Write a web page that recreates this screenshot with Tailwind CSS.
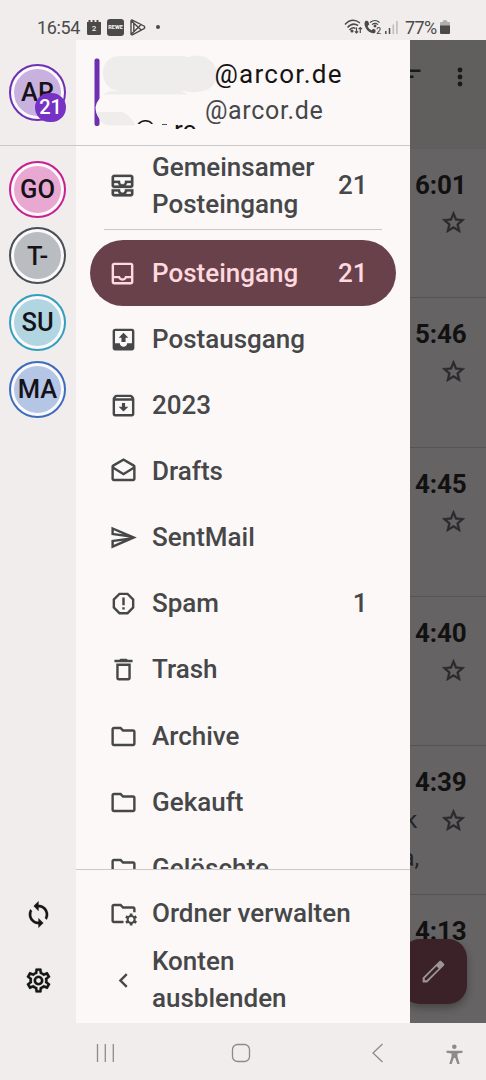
<!DOCTYPE html>
<html lang="de">
<head>
<meta charset="utf-8">
<title>Mail</title>
<script src="https://cdn.jsdelivr.net/npm/@tailwindcss/browser@4"></script>
</head>
<body class="w-[486px] h-[1080px] overflow-hidden bg-[#f0edec] font-['Roboto',sans-serif] text-[#464749]">
<svg class="hidden">
  <symbol id="folder" viewBox="0 0 24 24"><path d="M9.17 6l2 2H20v10H4V6h5.17M10 4H4c-1.1 0-1.99.9-1.99 2L2 18c0 1.1.9 2 2 2h16c1.1 0 2-.9 2-2V8c0-1.1-.9-2-2-2h-8l-2-2z"/></symbol>
  <symbol id="star" viewBox="0 0 24 24"><path d="M22 9.24l-7.19-.62L12 2 9.19 8.63 2 9.24l5.46 4.73L5.82 21 12 17.27 18.18 21l-1.63-7.03L22 9.24zM12 15.4l-3.76 2.27 1-4.28-3.32-2.88 4.38-.38L12 6.1l1.71 4.04 4.38.38-3.32 2.88 1 4.28L12 15.4z"/></symbol>
</svg>
<div class="flex flex-col h-full">
  <!-- status bar -->
  <header class="h-10 shrink-0 flex items-start pt-[17px] pl-[37px] pr-[36px] text-[#4b4a49]">
    <span class="w-[43px] text-[18px] leading-[21px] whitespace-nowrap tracking-[-0.35px]">16:54</span>
    <svg class="w-[14px] h-[15px] ml-[7px] mt-[3px]" viewBox="0 0 14 15"><path fill="#4b4a49" d="M0 2h1.5V0h2v2h2V0h2v2h2V0h2v2H14v11.5a1.5 1.5 0 0 1-1.5 1.5h-11A1.5 1.5 0 0 1 0 13.500z"/><text x="7" y="11" font-size="8" font-weight="500" text-anchor="middle" fill="#f0edec">2</text></svg>
    <span class="w-[17px] h-[17px] ml-[6px] mt-[2px] rounded-[3px] bg-[#4b4a49] text-[#f0edec] text-[5.500px] leading-[17px] font-black text-center flex justify-center">REWE</span>
    <svg class="w-4 h-[17px] ml-[6px] mt-[2px]" viewBox="0 0 16 17" fill="none" stroke="#4b4a49" stroke-width="1.400" stroke-linejoin="round"><path d="M1 2.500Q1 .5 2.800 1.300L14 7q1.500 1.300 0 2.600L2.800 15.600Q1 16.500 1 14.500zM1.500 2l9.700 9M1.500 15l9.700-9.400M3.800 4.500v8"/></svg>
    <span class="size-1 rounded-full bg-[#4b4a49] ml-[9.500px] mt-2"></span>
    <span class="grow"></span>
    <svg class="w-[55px] h-4 mt-[2px]" viewBox="0 0 55 16" fill="none" stroke="#4b4a49" stroke-width="1.500">
      <path d="M1 5.500Q8-2 16 4M3.500 8.500Q8.500 3 14 6.500M5.500 11Q8.500 7.500 11.500 9.500"/><circle cx="8" cy="12" r=".8" fill="#4b4a49"/><path stroke-width="1.200" d="M12.500 8.500v5.500M10.800 12.300l1.700 1.700 1.700-1.700M16.300 14V8.500M14.600 10.200l1.700-1.700 1.700 1.700"/>
      <path fill="#4b4a49" stroke="none" d="M22 1.800l2 .2 1.300 3.200-1.700 2c1 2 2.100 3.100 4 4l1.600-1.500 2.300 1.100v2.100c-.8 1.500-2 1.700-3.500 1.200C24 13 20.500 8.500 20.500 4.500c.2-1.400.6-2.400 1.500-2.700z"/>
      <path stroke-width="1.200" d="M26 3.500Q31-.5 35.500 3.500M28 5.600Q31 3 34 5.600"/><circle cx="31" cy="7" r=".7" fill="#4b4a49"/><text x="32.300" y="14.500" font-size="8.500" font-weight="500" stroke="none" fill="#4b4a49">2</text>
      <path stroke-width="1.500" d="M41.800 15v-3M45.500 15V9"/><path stroke-width="1.500" stroke="#bdbab9" d="M49.300 15V5.500M52.900 15V2"/>
    </svg>
    <span class="w-[33px] ml-[6px] text-[18px] leading-[21px] tracking-[-0.6px] whitespace-nowrap">77%</span>
    <svg class="w-[10px] h-[14px] ml-[2px] mt-[3px]" viewBox="0 0 10 14"><path fill="#b0adac" d="M0 3q0-1 1-1h1.500q0-2 2.500-2t2.500 2H9q1 0 1 1v3H0z"/><path fill="#4b4a49" d="M0 5.500h10V13q0 1-1 1H1q-1 0-1-1z"/></svg>
  </header>

  <main class="flex h-[983px] shrink-0">
    <!-- account rail -->
    <nav class="w-[76px] pr-px shrink-0 flex flex-col items-center text-[25.500px] font-medium text-[#151318]">
      <div class="w-[76px] h-[106px] -mr-px border-b border-[#cbc8c8] flex justify-center pt-6 pr-px shrink-0">
        <div class="relative size-[57px] rounded-full border-2 border-[#6e31b5] bg-[#fbf9fb] p-[3px]">
          <div class="size-full rounded-full bg-[#c9b1df] flex items-center justify-center">AR</div>
          <span class="absolute left-[24px] top-[26.500px] w-[31px] h-[29px] rounded-full bg-[#7731c4] text-white text-[20px] flex items-center justify-center">21</span>
        </div>
      </div>
      <div class="flex flex-col gap-[9.700px] pt-[14.500px]">
        <div class="size-[57px] rounded-full border-2 border-[#c82090] bg-[#fbf9fb] p-[3px]"><div class="size-full rounded-full bg-[#e9a8d1] flex items-center justify-center">GO</div></div>
        <div class="size-[57px] rounded-full border-2 border-[#475056] bg-[#fbf9fb] p-[3px]"><div class="size-full rounded-full bg-[#b9bcc0] flex items-center justify-center">T-</div></div>
        <div class="size-[57px] rounded-full border-2 border-[#349fbd] bg-[#fbf9fb] p-[3px]"><div class="size-full rounded-full bg-[#b1d5e1] flex items-center justify-center">SU</div></div>
        <div class="size-[57px] rounded-full border-2 border-[#3d6bbf] bg-[#fbf9fb] p-[3px]"><div class="size-full rounded-full bg-[#b5c5e5] flex items-center justify-center">MA</div></div>
      </div>
      <div class="mt-auto flex flex-col gap-[37px] pb-[28px] pl-px">
        <svg class="size-[29px]" viewBox="0 0 24 24" fill="#151515" stroke="#151515" stroke-width=".2"><path d="M12 4V1L8 5l4 4V6c3.310 0 6 2.690 6 6 0 1.010-.25 1.970-.7 2.800l1.460 1.460C19.540 15.030 20 13.570 20 12c0-4.420-3.580-8-8-8zm0 14c-3.310 0-6-2.690-6-6 0-1.010.25-1.970.7-2.800L5.240 7.740C4.460 8.970 4 10.430 4 12c0 4.420 3.580 8 8 8v3l4-4-4-4v3z"/></svg>
        <svg class="size-[29px]" viewBox="0 0 24 24" fill="#151515" stroke="#151515" stroke-width=".2"><path d="M19.43 12.98c.04-.32.07-.64.07-.98 0-.34-.03-.66-.07-.98l2.110-1.650c.19-.15.24-.42.12-.64l-2-3.460c-.09-.16-.26-.25-.44-.25-.06 0-.12.010-.17.030l-2.490 1c-.52-.4-1.080-.73-1.690-.98l-.38-2.650C14.460 2.180 14.250 2 14 2h-4c-.25 0-.46.18-.49.42l-.38 2.650c-.61.25-1.170.59-1.690.98l-2.490-1c-.06-.02-.12-.03-.18-.03-.17 0-.34.09-.43.25l-2 3.460c-.13.22-.07.49.12.64l2.110 1.650c-.04.32-.07.65-.07.98 0 .33.03.66.07.98l-2.110 1.650c-.19.15-.24.42-.12.64l2 3.460c.09.16.26.25.44.25.06 0 .12-.01.17-.03l2.490-1c.52.4 1.080.73 1.690.98l.38 2.650c.03.24.24.42.49.42h4c.25 0 .46-.18.49-.42l.38-2.650c.61-.25 1.170-.59 1.690-.98l2.490 1c.06.02.12.03.18.03.17 0 .34-.09.43-.25l2-3.460c.12-.22.07-.49-.12-.64l-2.110-1.650zm-1.980-1.710c.04.31.05.52.05.73 0 .21-.02.43-.05.73l-.14 1.130.89.7 1.080.84-.7 1.210-1.270-.51-1.040-.42-.9.68c-.43.32-.84.56-1.250.73l-1.060.43-.16 1.130-.2 1.350h-1.400l-.19-1.350-.16-1.130-1.060-.43c-.43-.18-.83-.41-1.230-.71l-.91-.7-1.060.43-1.270.51-.7-1.210 1.080-.84.89-.7-.14-1.130c-.03-.31-.05-.54-.05-.74s.02-.43.05-.73l.14-1.130-.89-.7-1.080-.84.7-1.210 1.270.51 1.040.42.9-.68c.43-.32.84-.56 1.250-.73l1.060-.43.16-1.130.2-1.350h1.390l.19 1.350.16 1.130 1.060.43c.43.18.83.41 1.230.71l.91.7 1.060-.43 1.270-.51.7 1.210-1.070.85-.89.7.14 1.130zM12 8c-2.210 0-4 1.790-4 4s1.790 4 4 4 4-1.790 4-4-1.790-4-4-4zm0 6c-1.100 0-2-.9-2-2s.9-2 2-2 2 .9 2 2-.9 2-2 2z"/></svg>
      </div>
    </nav>

    <!-- drawer -->
    <section class="w-[334px] shrink-0 bg-[#fcf8f7] flex flex-col text-[26px] font-medium leading-[37px]">
      <div class="relative h-[106px] shrink-0 border-b border-[#cbc8c8] font-normal whitespace-nowrap overflow-hidden">
        <svg class="absolute inset-0 w-[334px] h-[105px]" viewBox="76 40 334 105">
          <rect x="94.500" y="58.500" width="5" height="67.500" rx="2" fill="#6e2fb0"/>
          <path fill="#efedec" d="M119 56h66q4 2 7 0 12-2 20 6c8 9 6 24-6 28q-11 4-22 1h-64c-22 0-23-35-1-35z"/>
          <path fill="#efedec" d="M103 95q4-4 11-4h66q5 1 8 4z"/>
          <path fill="#fcf8f7" d="M106 94.500h82q14 2 14 14t-12 15h-78q-16-2-16.500-16 1.500-10 10.500-13z"/>
          <path fill="#efedec" d="M96 111.500q12 1 25 0 11 4 14 14h-27q-8-1-12-14z"/>
        </svg>
        <span class="absolute left-[138.500px] top-[16px] text-[26px] tracking-[1.250px] text-[#151313]">@arcor.de</span>
        <span class="absolute left-[129px] top-[52px] text-[25px] tracking-[0.650px]">@arcor.de</span>
        <span class="absolute left-[58px] top-[79px] w-[24px] h-[5px] overflow-hidden text-[#151313] text-[24px]"><span class="block mt-[-8px]">@</span></span>
        <span class="absolute left-[86px] top-[84px] w-[5px] h-px bg-[#555]"></span>
        <span class="absolute left-[98px] top-[79px] w-[24px] h-[10px] overflow-hidden text-[#151313] text-[26px]"><span class="block mt-[-7px]">rc</span></span>
      </div>

      <div class="h-[723px] shrink-0 overflow-hidden px-[14px]">
        <div class="h-[79px] flex items-center pl-[18px] pr-[28.500px] gap-[15px]">
          <svg class="size-[29px] shrink-0" viewBox="0 0 24 24" fill="#464749" stroke="#464749" stroke-width=".2"><path d="M19 3H5c-1.100 0-2 .9-2 2v7c0 1.100.9 2 2 2h14c1.100 0 2-.9 2-2V5c0-1.100-.9-2-2-2zM5 10h3.130c.21.78.67 1.470 1.270 2H5v-2zm14 2h-4.400c.6-.53 1.060-1.220 1.270-2H19v2zm0-4h-5v1c0 1.070-.93 2-2 2s-2-.93-2-2V8H5V5h14v3zm-5 7v1c0 .47-.19.9-.48 1.250-.37.45-.92.75-1.520.75s-1.150-.3-1.520-.75c-.29-.35-.48-.78-.48-1.250v-1H3v4c0 1.100.9 2 2 2h14c1.100 0 2-.9 2-2v-4h-7zm-9 2h3.130c.02.09.06.17.09.25.24.68.65 1.280 1.180 1.750H5v-2zm14 2h-4.400c.54-.47.95-1.070 1.180-1.750.03-.08.07-.16.09-.25H19v2z"/></svg>
          <span class="grow">Gemeinsamer<br>Posteingang</span><span>21</span>
        </div>
        <div class="h-px mx-[14px] mt-[4px] mb-[10px] bg-[#cbc8c8]"></div>
        <div class="h-[66.150px] rounded-full bg-[#69414a] text-[#ffd9df] flex items-center pl-[18px] pr-[28.500px] gap-[15px]">
          <svg class="size-[29px]" viewBox="0 0 24 24" fill="#ffd9df"><path d="M19 3H5c-1.100 0-2 .9-2 2v14c0 1.100.89 2 2 2h14c1.100 0 2-.9 2-2V5c0-1.100-.9-2-2-2zm0 16H5v-3h3.560c.69 1.190 1.970 2 3.450 2s2.750-.81 3.450-2H19v3zm0-5h-4.990c0 1.100-.9 2-2 2s-2-.9-2-2H5V5h14v9z"/></svg>
          <span class="grow">Posteingang</span><span>21</span>
        </div>
        <div class="h-[66.150px] flex items-center pl-[18.500px] gap-[14.500px]">
          <svg class="size-[29px]" viewBox="0 0 24 24" fill="#464749"><path d="M19 3H5c-1.100 0-2 .9-2 2v14c0 1.100.9 2 2 2h14c1.100 0 2-.9 2-2V5c0-1.100-.9-2-2-2zm0 12h-4c0 1.660-1.350 3-3 3s-3-1.340-3-3H5V5h14v10zM8 10.500h2.300v3.500h3.400v-3.500H16l-4-4z"/></svg>
          <span>Postausgang</span>
        </div>
        <div class="h-[66.150px] flex items-center pl-[18.500px] gap-[14.500px]">
          <svg class="size-[29px]" viewBox="0 0 24 24" fill="#464749"><path d="M20.540 5.230l-1.390-1.680C18.880 3.210 18.470 3 18 3H6c-.47 0-.88.21-1.160.55L3.460 5.230C3.170 5.570 3 6.020 3 6.500V19c0 1.100.9 2 2 2h14c1.100 0 2-.9 2-2V6.500c0-.48-.17-.93-.46-1.270zM6.240 5h11.520l.83 1H5.420l.82-1zM5 19V8h14v11H5zM13.300 10h-2.600v3H8l4 4 4-4h-2.700z"/></svg>
          <span>2023</span>
        </div>
        <div class="h-[66.150px] flex items-center pl-[18.500px] gap-[14.500px]">
          <svg class="size-[29px]" viewBox="0 0 24 24" fill="#464749"><path d="M21.990 8c0-.72-.37-1.350-.94-1.700L12 1 2.950 6.300C2.380 6.650 2 7.280 2 8v10c0 1.100.9 2 2 2h16c1.100 0 2-.9 2-2l-.01-10zM20 8v.01L12 13 4 8l8-4.680L20 8zM4 18v-7.660l8 5.020 8-4.990V18H4z"/></svg>
          <span>Drafts</span>
        </div>
        <div class="h-[66.150px] flex items-center pl-[18.500px] gap-[14.500px]">
          <svg class="size-[29px]" viewBox="0 0 24 24" fill="#464749"><path d="M4.010 6.030l7.510 3.220-7.520-1 .01-2.220m7.500 8.720L4 17.970v-2.220l7.510-1M2.010 3L2 10l15 2-15 2 .01 7L23 12 2.010 3z"/></svg>
          <span>SentMail</span>
        </div>
        <div class="h-[66.150px] flex items-center pl-[18.500px] pr-[28.500px] gap-[14.500px]">
          <svg class="size-[29px]" viewBox="0 0 24 24" fill="#464749"><path d="M15.730 3H8.270L3 8.270v7.460L8.270 21h7.460L21 15.730V8.270L15.730 3zM19 14.900L14.900 19H9.100L5 14.900V9.100L9.100 5h5.800L19 9.100v5.800zM11 7h2v6.500h-2zM11 15h2v2h-2z"/></svg>
          <span class="grow">Spam</span><span>1</span>
        </div>
        <div class="h-[66.150px] flex items-center pl-[18.500px] gap-[14.500px]">
          <svg class="size-[29px]" viewBox="0 0 24 24" fill="#464749"><path d="M16 9v10H8V9h8m-1.500-6h-5l-1 1H4.500v2h15V4h-4l-1-1zM18 7H6v12c0 1.100.9 2 2 2h8c1.100 0 2-.9 2-2V7z"/></svg>
          <span>Trash</span>
        </div>
        <div class="h-[66.150px] flex items-center pl-[18.500px] gap-[14.500px]"><svg class="size-[29px]" fill="#464749"><use href="#folder"/></svg><span>Archive</span></div>
        <div class="h-[66.150px] flex items-center pl-[18.500px] gap-[14.500px]"><svg class="size-[29px]" fill="#464749"><use href="#folder"/></svg><span>Gekauft</span></div>
        <div class="h-[66.150px] flex items-center pl-[18.500px] gap-[14.500px]"><svg class="size-[29px]" fill="#464749"><use href="#folder"/></svg><span>Gelöschte</span></div>
      </div>

      <div class="grow border-t border-[#cbc8c8] px-[14px] pt-[10px]">
        <div class="h-[66px] flex items-center pl-[18.500px] gap-[14.500px]">
          <svg class="size-[29px] shrink-0" viewBox="0 0 24 24" fill="#464749"><path d="M12 20H4c-1.100 0-2-.9-2-2V6c0-1.100.9-2 2-2h6l2 2h8c1.100 0 2 .9 2 2v3h-2V8h-8.800l-2-2H4v12h8z"/><g fill="none" stroke="#464749"><circle cx="18.300" cy="17" r="2.900" stroke-width="1.700"/><path stroke-width="2.200" d="M18.300 14.200v-2.200M18.300 19.800v2.200M20.720 15.600l1.900-1.100M15.880 18.400l-1.900 1.100M20.720 18.400l1.900 1.100M15.880 15.600l-1.900-1.100"/></g></svg>
          <span class="whitespace-nowrap">Ordner verwalten</span>
        </div>
        <div class="h-[68px] flex items-center pl-[18.500px] gap-[14.500px]">
          <svg class="size-[29px] shrink-0" viewBox="0 0 24 24" fill="#464749"><path d="M15.410 7.410L14 6l-6 6 6 6 1.410-1.410L10.830 12z"/></svg>
          <span>Konten<br>ausblenden</span>
        </div>
      </div>
    </section>

    <!-- dimmed message list -->
    <aside class="relative w-[76px] shrink-0 bg-[#656364] overflow-hidden flex flex-col text-[26px] font-bold leading-[30px] text-[#121112]">
      <div class="h-[109px] shrink-0 bg-[#605f5d] flex">
        <svg class="w-[76px] h-[109px]" viewBox="0 0 76 109" fill="#1a1919"><path d="M0 29.500h10.500v2.500H0zM0 35.500h3.500v2.500H0z"/><circle cx="50" cy="30" r="2.400"/><circle cx="50" cy="37" r="2.400"/><circle cx="50" cy="44" r="2.400"/></svg>
      </div>
      <div class="h-[149.300px] shrink-0 border-b border-[#565455] pt-[21px] pl-[5px]"><div class="tracking-[-0.1px]">6:01</div><svg class="size-[27px] ml-[24.500px] mt-[9px]" fill="#2b292c" stroke="#2b292c" stroke-width=".4"><use href="#star"/></svg></div>
      <div class="h-[149.300px] shrink-0 border-b border-[#565455] pt-[21px] pl-[5px]"><div class="tracking-[-0.1px]">5:46</div><svg class="size-[27px] ml-[24.500px] mt-[9px]" fill="#2b292c" stroke="#2b292c" stroke-width=".4"><use href="#star"/></svg></div>
      <div class="h-[149.300px] shrink-0 border-b border-[#565455] pt-[21px] pl-[5px]"><div class="tracking-[-0.1px]">4:45</div><svg class="size-[27px] ml-[24.500px] mt-[9.500px]" fill="#2b292c" stroke="#2b292c" stroke-width=".4"><use href="#star"/></svg></div>
      <div class="h-[149.300px] shrink-0 border-b border-[#565455] pt-[21px] pl-[5px]"><div class="tracking-[-0.1px]">4:40</div><svg class="size-[27px] ml-[24.500px] mt-[9.500px]" fill="#2b292c" stroke="#2b292c" stroke-width=".4"><use href="#star"/></svg></div>
      <div class="h-[149.300px] shrink-0 border-b border-[#565455] pt-[21px] pl-[5px]">
        <div class="tracking-[-0.1px]">4:39</div>
        <div class="flex -ml-[10px] mt-[8px] text-[24px] font-normal text-[#252325]"><span class="w-[34.500px]">k</span><svg class="size-[27px] mt-[1.500px]" fill="#2b292c" stroke="#2b292c" stroke-width=".4"><use href="#star"/></svg></div>
        <div class="-ml-[13.500px] mt-[8px] text-[24px] font-normal text-[#252325]">a,</div>
      </div>
      <div class="pt-[21px] pl-[5px] tracking-[-0.1px]">4:13</div>
      <div class="absolute left-[-9px] top-[898.500px] size-[65.500px] rounded-[19px] bg-[#3a2228] shadow-[0_4px_8px_rgba(0,0,0,0.3)] flex items-center justify-center">
        <svg class="size-[29px]" viewBox="0 0 24 24" fill="#9d9595"><path fill-rule="evenodd" d="M17.660 3c-.25 0-.51.1-.7.29L3 17.250V21h3.750L20.710 7.040c.39-.39.39-1.020 0-1.410l-2.340-2.340c-.2-.2-.45-.29-.71-.29zM14.500 7.700l1.800 1.800L6.300 19.300H4.800v-1.700z"/></svg>
      </div>
    </aside>
  </main>

  <!-- system navigation -->
  <footer class="h-[57px] shrink-0 flex">
    <svg class="w-[486px] h-[57px]" viewBox="0 1023 486 57" fill="none" stroke="#8d8b8a" stroke-width="1.300">
      <path d="M97.500 1044v18M105.300 1044v18M113.300 1044v18"/><rect x="232.500" y="1044.500" width="17" height="17" rx="5"/><path d="M382.500 1044l-9.500 9 9.500 9"/>
      <g fill="#8d8b8a" stroke="none"><circle cx="454.300" cy="1046.800" r="2.300"/><path d="M446.500 1050.800h16v1.900l-5 .8v3l2.200 7.500h-2.400l-2.100-6h-1.400l-2.100 6h-2.400l2.200-7.500v-3l-5-.8z"/></g>
    </svg>
  </footer>
</div>
</body>
</html>
